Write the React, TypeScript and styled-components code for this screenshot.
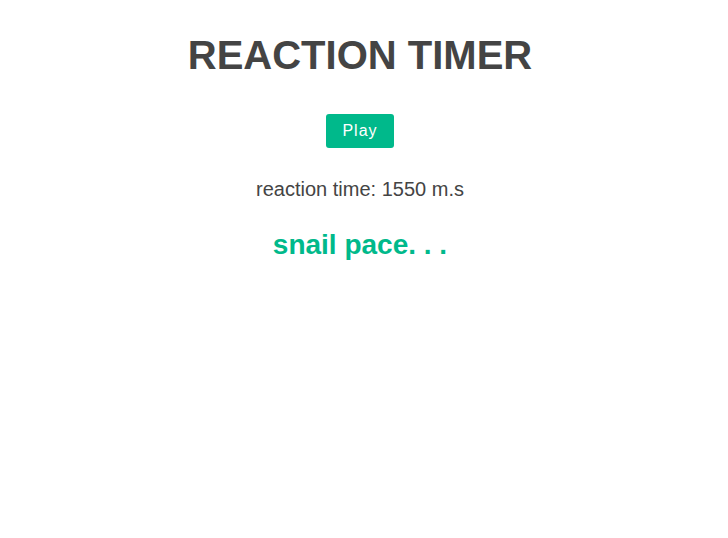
import React from "react";
import styled, { createGlobalStyle } from "styled-components";

const Global = createGlobalStyle`
  body {
    margin: 0;
    background: #fff;
    font-family: "Liberation Sans", Arial, sans-serif;
  }
`;

const Page = styled.div`
  text-align: center;
  color: #444;
  padding: 32px 8px 0 0;
`;

const Title = styled.h1`
  font-size: 40px;
  font-weight: bold;
  margin: 0 0 36px;
  line-height: 46px;
`;

const PlayButton = styled.button`
  background: #00b98b;
  color: #fff;
  border: none;
  border-radius: 3px;
  font-family: "Liberation Sans", Arial, sans-serif;
  font-size: 16px;
  letter-spacing: 1px;
  height: 34px;
  width: 68px;
  padding: 0;
  cursor: pointer;
`;

const Score = styled.p`
  font-size: 20px;
  margin: 30px 0 0;
  line-height: 23px;
`;

const Rank = styled.p`
  font-size: 28px;
  font-weight: bold;
  color: #00b98b;
  margin: 28px 0 0;
  line-height: 32px;
`;

export default function App() {
  return (
    <>
      <Global />
      <Page>
        <Title>REACTION TIMER</Title>
        <PlayButton>Play</PlayButton>
        <Score>reaction time: 1550 m.s</Score>
        <Rank>snail pace. . .</Rank>
      </Page>
    </>
  );
}
